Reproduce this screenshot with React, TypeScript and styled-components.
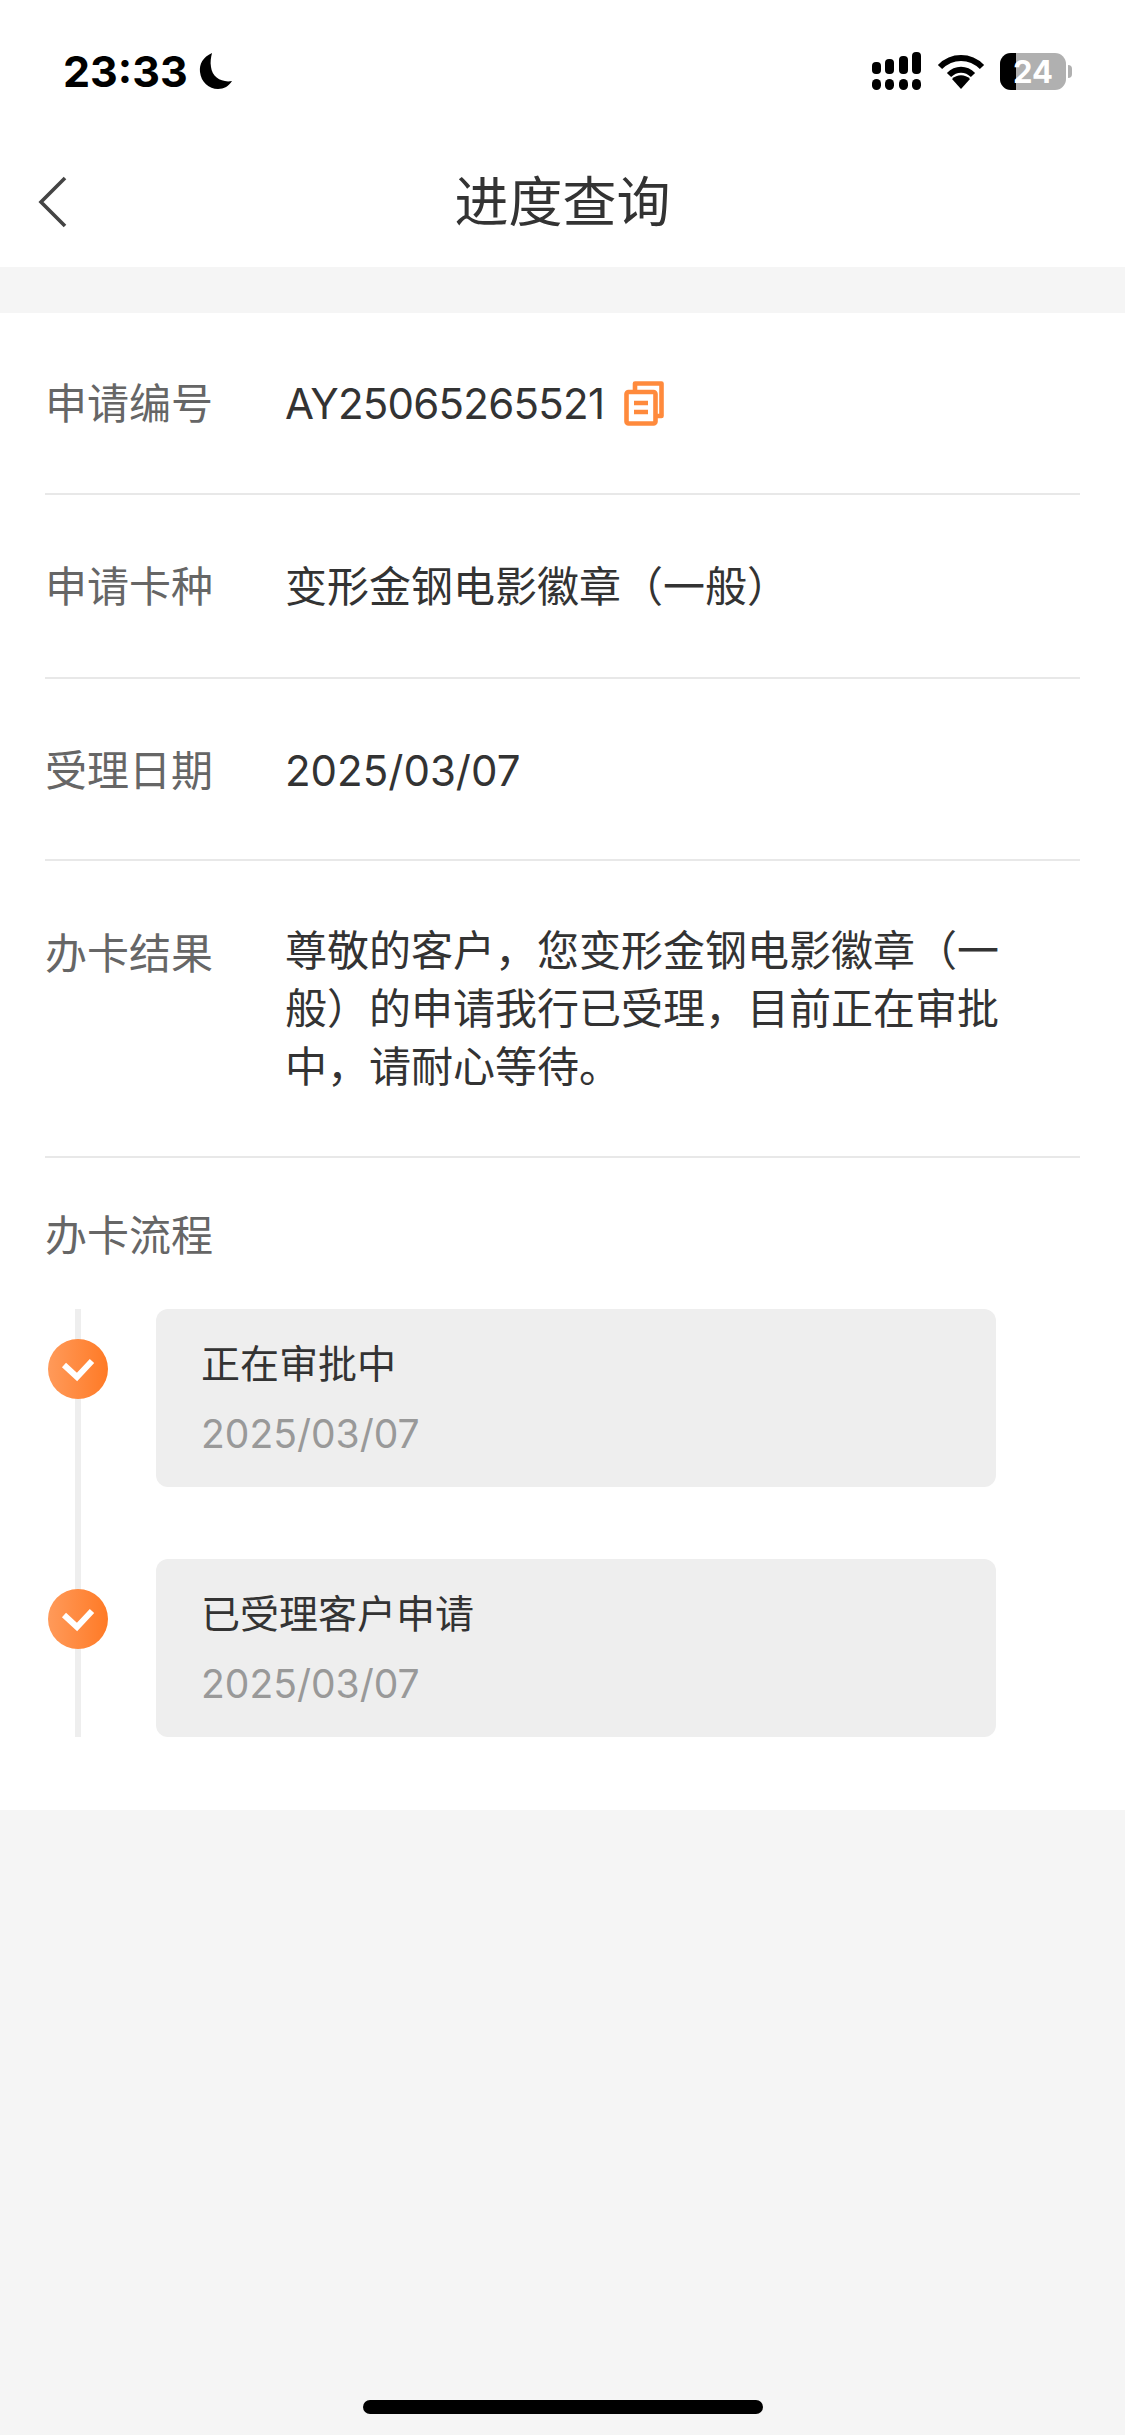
import React from 'react';
import styled, { createGlobalStyle } from 'styled-components';

const FONT = 'Inter, "Noto Sans CJK SC", sans-serif';

const GlobalStyle = createGlobalStyle`
  html, body {
    margin: 0;
    padding: 0;
    background: #f5f5f5;
  }
  body {
    font-family: ${FONT};
  }
`;

const Page = styled.div`
  width: 1125px;
  height: 2435px;
  position: relative;
  overflow: hidden;
  background: #f5f5f5;
`;

const Header = styled.header`
  height: 267px;
  background: #fff;
  display: flex;
  flex-direction: column;
`;

const StatusBar = styled.div`
  height: 142px;
  padding: 48px 53px 0 63px;
  box-sizing: border-box;
  display: flex;
  justify-content: space-between;
  align-items: flex-start;
`;

const TimeGroup = styled.div`
  display: flex;
  align-items: center;
  gap: 10px;
  height: 46px;
`;

const Time = styled.span`
  font-size: 43px;
  font-weight: 700;
  color: #000;
`;

const StatusIcons = styled.div`
  display: flex;
  align-items: center;
  gap: 15px;
  height: 46px;
`;

const Battery = styled.div`
  position: relative;
  width: 66px;
  height: 37px;
  border-radius: 11px;
  overflow: hidden;
  background: #b0b0b0;
  display: flex;
  align-items: center;
  justify-content: center;
  color: #fff;
  font-size: 31px;
  font-weight: 700;
  &::before {
    content: '';
    position: absolute;
    left: 0;
    top: 0;
    bottom: 0;
    width: 16px;
    background: #000;
  }
  span {
    position: relative;
  }
`;

const BatteryWrap = styled.div`
  display: flex;
  align-items: center;
  gap: 2px;
`;

const BatteryCap = styled.div`
  width: 4px;
  height: 13px;
  border-radius: 0 4px 4px 0;
  background: #b0b0b0;
`;

const NavBar = styled.div`
  flex: 1;
  position: relative;
  display: flex;
  align-items: center;
  justify-content: center;
`;

const BackIcon = styled.svg`
  position: absolute;
  left: 36px;
  top: 33px;
`;

const Title = styled.h1`
  margin: 0 0 4px;
  font-size: 54px;
  font-weight: 400;
  color: #333;
  line-height: 1;
`;

const Panel = styled.main`
  margin-top: 46px;
  height: 1497px;
  box-sizing: border-box;
  background: #fff;
  padding: 0 45px;
`;

const Row = styled.div<{ $height: number; $top?: number }>`
  height: ${(p) => p.$height}px;
  box-sizing: border-box;
  border-bottom: 2px solid #e8e8e8;
  display: flex;
  align-items: flex-start;
  padding-top: ${(p) => p.$top ?? 61}px;
`;

const Label = styled.div`
  width: 240px;
  flex: none;
  font-size: 42px;
  line-height: 60px;
  color: #666;
`;

const Value = styled.div`
  font-size: 42px;
  line-height: 60px;
  color: #333;
  display: flex;
  align-items: center;
  width: 724px;
`;

const ResultText = styled(Value)`
  display: block;
  margin-top: -2px;
  line-height: 58px;
`;

const ApplyNo = styled.span`
  letter-spacing: -0.75px;
`;

const CopyIcon = styled.svg`
  margin: -2px 0 0 20px;
  flex: none;
`;

const FlowLabel = styled(Label)`
  margin-top: 48px;
`;

const Timeline = styled.div`
  margin-top: 43px;
  position: relative;
  width: 951px;
  display: flex;
  flex-direction: column;
  gap: 72px;
  &::before {
    content: '';
    position: absolute;
    left: 30px;
    top: 0;
    bottom: 0;
    width: 6px;
    background: #eeeeee;
  }
`;

const Step = styled.div`
  position: relative;
  margin-left: 111px;
  height: 178px;
  box-sizing: border-box;
  padding: 26px 45px;
  background: #eeeeee;
  border-radius: 12px;
`;

const StepDot = styled.div`
  position: absolute;
  left: -108px;
  top: 30px;
  width: 60px;
  height: 60px;
  border-radius: 50%;
  background: linear-gradient(90deg, #ff9a5a, #ff7a26);
  display: flex;
  align-items: center;
  justify-content: center;
`;

const StepTitle = styled.div`
  font-size: 39px;
  line-height: 58px;
  color: #333;
`;

const StepDate = styled.div`
  margin-top: 12px;
  font-size: 39px;
  line-height: 58px;
  color: #999;
`;

const HomeBar = styled.div`
  position: absolute;
  left: 363px;
  bottom: 21px;
  width: 400px;
  height: 14px;
  border-radius: 7px;
  background: #000;
`;

const steps = [
  { title: '正在审批中', date: '2025/03/07' },
  { title: '已受理客户申请', date: '2025/03/07' },
];

function Check() {
  return (
    <svg width="34" height="26" viewBox="0 0 34 26" fill="none">
      <path d="M3 9l13 12L31 5" stroke="#fff" strokeWidth="6" />
    </svg>
  );
}

export default function App() {
  return (
    <Page>
      <GlobalStyle />
      <Header>
        <StatusBar>
          <TimeGroup>
            <Time>23:33</Time>
            <svg width="36" height="38" viewBox="0 0 34 38">
              <path d="M13 1C4 5 0 12 1 20c1 10 9 17 18 17 6 0 11-3 14-8-10 2-20-4-21-14-1-5 0-10 1-14z" fill="#000" />
            </svg>
          </TimeGroup>
          <StatusIcons>
            <svg width="50" height="38" viewBox="0 0 50 38" fill="#000">
              <rect x="0" y="10" width="9" height="12" rx="4" />
              <rect x="13" y="7" width="9" height="15" rx="4" />
              <rect x="27" y="4" width="9" height="18" rx="4" />
              <rect x="40" y="0" width="9" height="22" rx="4" />
              <rect x="0" y="27" width="9" height="11" rx="4.5" />
              <rect x="13" y="27" width="9" height="11" rx="4.5" />
              <rect x="27" y="27" width="9" height="11" rx="4.5" />
              <rect x="40" y="27" width="9" height="11" rx="4.5" />
            </svg>
            <svg width="48" height="36" viewBox="0 0 48 36" fill="none" stroke="#000">
              <path d="M3 14C15 2 33 2 45 14" strokeWidth="6" />
              <path d="M12 22c7-7 17-7 24 0" strokeWidth="6" />
              <path d="M15 26c5-5 13-5 18 0L24 36z" fill="#000" stroke="none" />
            </svg>
            <BatteryWrap>
              <Battery>
                <span>24</span>
              </Battery>
              <BatteryCap />
            </BatteryWrap>
          </StatusIcons>
        </StatusBar>
        <NavBar>
          <BackIcon width="32" height="54" viewBox="0 0 32 54" fill="none">
            <path d="M29 3L5 27l24 24" stroke="#444" strokeWidth="3.6" />
          </BackIcon>
          <Title>进度查询</Title>
        </NavBar>
      </Header>
      <Panel>
        <Row $height={182}>
          <Label>申请编号</Label>
          <Value>
            <ApplyNo>AY25065265521</ApplyNo>
            <CopyIcon width="40" height="45" viewBox="0 0 40 45" fill="none" stroke="#ff8a3c" strokeWidth="4.6">
              <path d="M11 9V2.5h26.5V35H33" strokeLinejoin="round" />
              <rect x="2.5" y="11" width="29" height="31.5" rx="2" />
              <path d="M10 22h14M10 31h14" />
            </CopyIcon>
          </Value>
        </Row>
        <Row $height={184} $top={62}>
          <Label>申请卡种</Label>
          <Value>变形金钢电影徽章（一般）</Value>
        </Row>
        <Row $height={182} $top={62}>
          <Label>受理日期</Label>
          <Value>2025/03/07</Value>
        </Row>
        <Row $height={297} $top={63}>
          <Label>办卡结果</Label>
          <ResultText>尊敬的客户，您变形金钢电影徽章（一般）的申请我行已受理，目前正在审批中，请耐心等待。</ResultText>
        </Row>
        <FlowLabel>办卡流程</FlowLabel>
        <Timeline>
          {steps.map((step) => (
            <Step key={step.title}>
              <StepDot>
                <Check />
              </StepDot>
              <StepTitle>{step.title}</StepTitle>
              <StepDate>{step.date}</StepDate>
            </Step>
          ))}
        </Timeline>
      </Panel>
      <HomeBar />
    </Page>
  );
}
